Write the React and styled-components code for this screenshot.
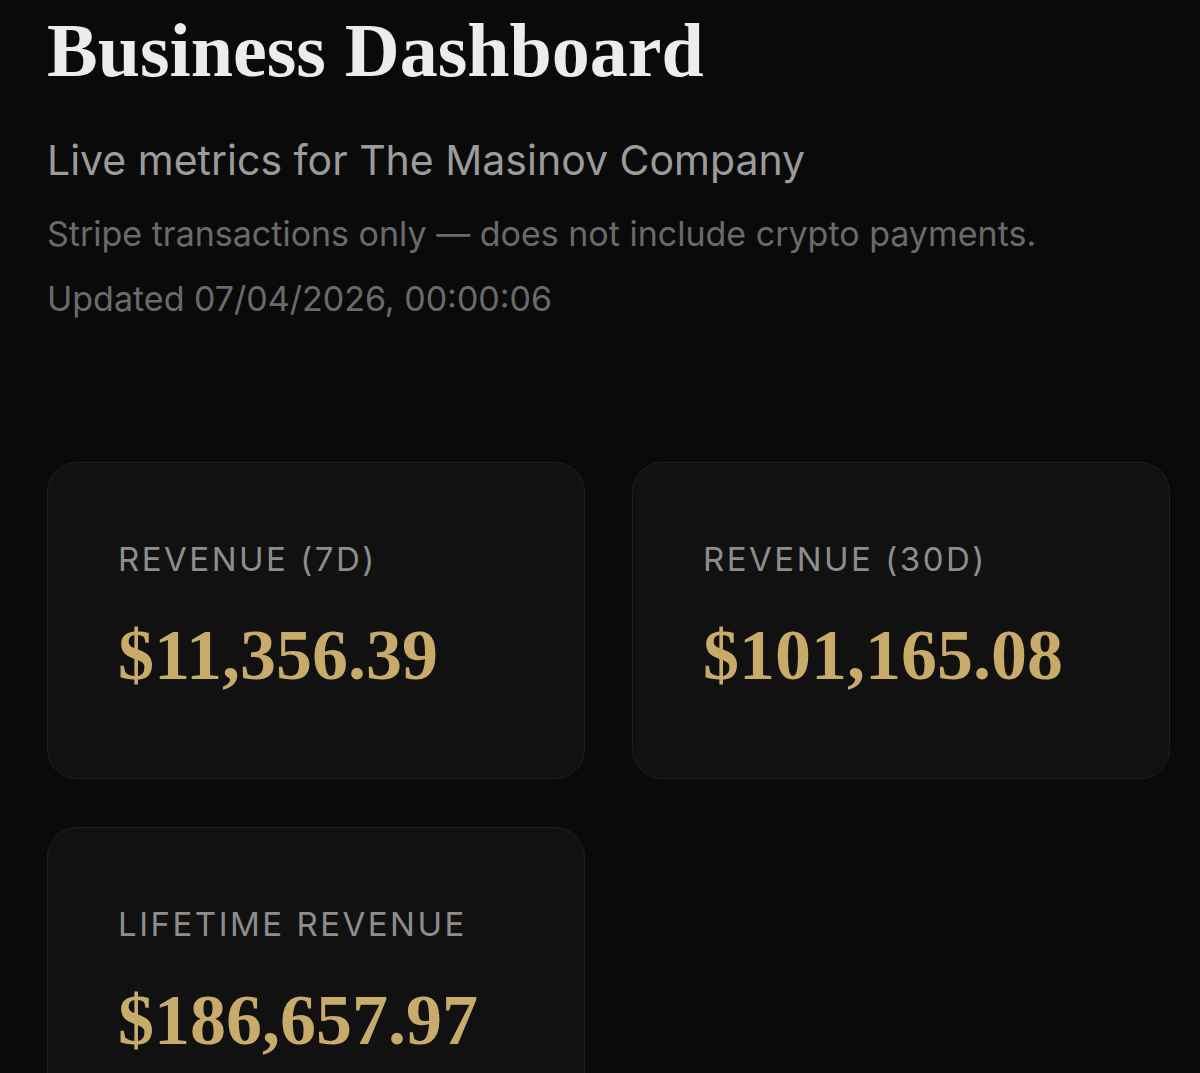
import React from 'react';
import styled, { createGlobalStyle } from 'styled-components';

const GlobalStyle = createGlobalStyle`
  html, body {
    margin: 0;
    padding: 0;
    background: #0a0a0a;
  }
`;

const metrics = [
  { label: 'Revenue (7D)', value: '$11,356.39' },
  { label: 'Revenue (30D)', value: '$101,165.08' },
  { label: 'Lifetime Revenue', value: '$186,657.97' },
];

const App = () => {
  return (
    <>
      <GlobalStyle />
      <StPage>
        <StHeader>
          <StTitle>Business Dashboard</StTitle>
          <StSubtitle>Live metrics for The Masinov Company</StSubtitle>
          <StNote $gap={29}>Stripe transactions only — does not include crypto payments.</StNote>
          <StNote $gap={24}>Updated 07/04/2026, 00:00:06</StNote>
        </StHeader>
        <StGrid>
          {metrics.map((m) => (
            <StCard key={m.label}>
              <StLabel>{m.label}</StLabel>
              <StValue>{m.value}</StValue>
            </StCard>
          ))}
        </StGrid>
      </StPage>
    </>
  );
};

export default App;

const StPage = styled.div`
  height: 1073px;
  overflow: hidden;
  background: #0a0a0a;
  padding: 9px 30px 0 47px;
  box-sizing: border-box;
  font-family: Inter, 'Liberation Sans', sans-serif;
`;

const StHeader = styled.header`
  display: flex;
  flex-direction: column;
`;

const StTitle = styled.h1`
  margin: 0;
  font-family: 'Liberation Serif', serif;
  font-weight: 700;
  font-size: 76px;
  line-height: 1.1;
  color: #ececec;
`;

const StSubtitle = styled.p`
  margin: 43px 0 0;
  font-size: 41px;
  line-height: 1.2;
  color: #9b9b9b;
`;

const StNote = styled.p`
  margin: ${(p) => p.$gap}px 0 0;
  font-size: 34px;
  line-height: 1.2;
  color: #6a6a6a;
`;

const StGrid = styled.div`
  display: grid;
  grid-template-columns: 538px 538px;
  gap: 48px 47px;
  margin-top: 143px;
`;

const StCard = styled.div`
  display: flex;
  flex-direction: column;
  gap: 32px;
  padding: 77px 70px 80px;
  background: #111111;
  border: 1.5px solid #202020;
  border-radius: 30px;
`;

const StLabel = styled.div`
  font-size: 33px;
  line-height: 1.2;
  letter-spacing: 2.5px;
  text-transform: uppercase;
  color: #8d8d8d;
`;

const StValue = styled.div`
  font-family: 'Liberation Serif', serif;
  font-weight: 700;
  font-size: 72px;
  line-height: 1.2;
  color: #c8aa6a;
`;
